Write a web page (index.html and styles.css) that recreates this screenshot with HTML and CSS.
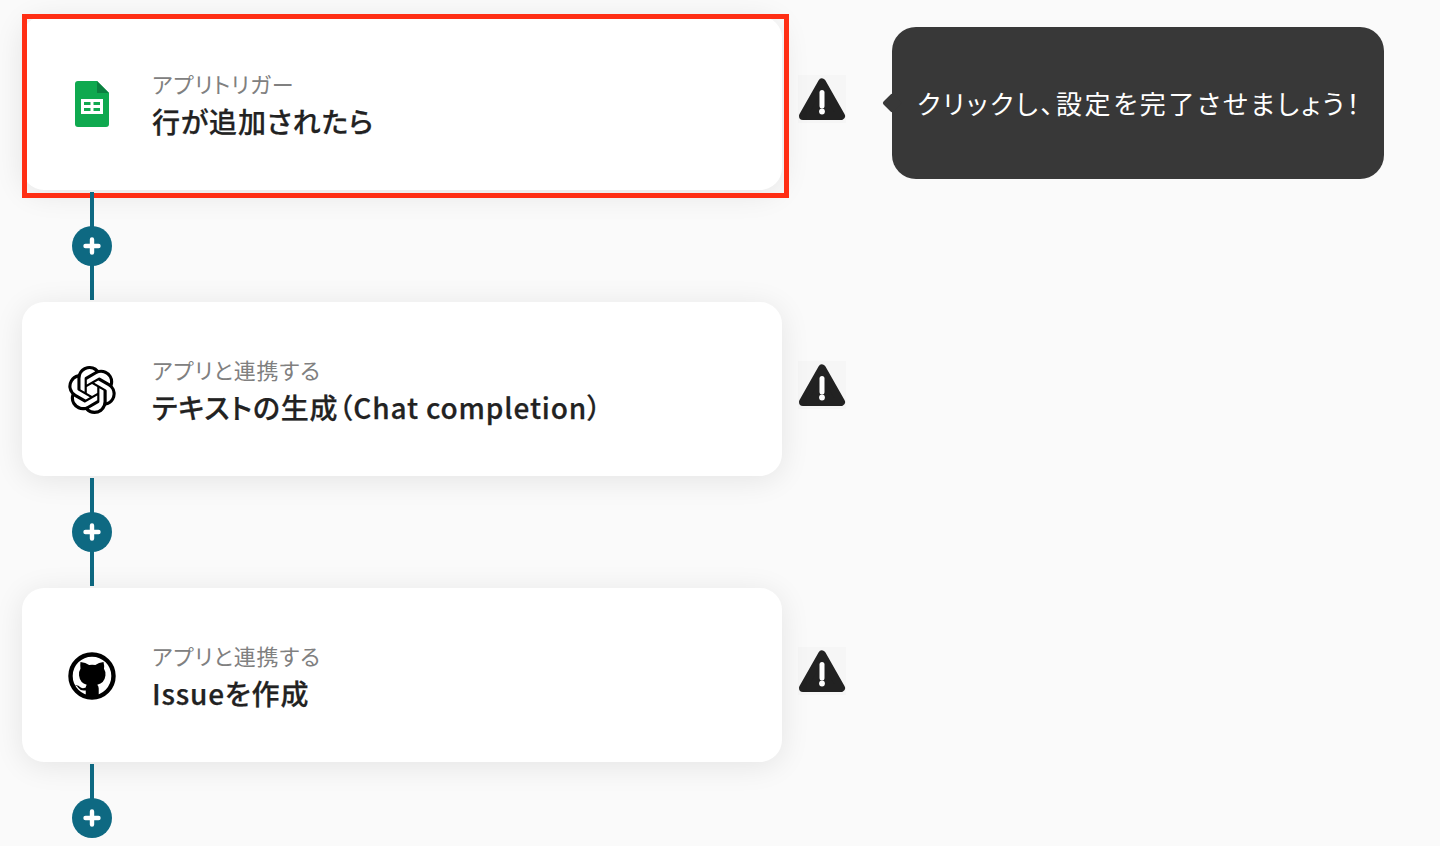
FILE: index.html
```html
<!DOCTYPE html>
<html lang="ja">
<head>
    <meta charset="UTF-8">
    <meta name="viewport" content="width=device-width, initial-scale=1.0">
    <title>フロー</title>
    <link rel="stylesheet" href="styles.css">
</head>
<body>
    <svg class="defs" width="0" height="0">
        <symbol id="warn" viewBox="0 0 48 48">
            <path d="M24 7.500 L43 41 L5 41 Z" fill="#222" stroke="#222" stroke-width="8" stroke-linejoin="round"/>
            <rect x="21.500" y="15" width="5" height="18.500" rx="2.500" fill="#fff"/>
            <circle cx="24" cy="36.500" r="2.900" fill="#fff"/>
        </symbol>
        <symbol id="plus" viewBox="0 0 40 40">
            <path d="M20 13.500 V26.500 M13.500 20 H26.500" stroke="#fff" stroke-width="4.400" stroke-linecap="round"/>
        </symbol>
    </svg>

    <div class="flow">
        <div class="step">
            <div class="card">
                <div class="highlight"></div>
                <div class="app-icon">
                    <svg width="34" height="46" viewBox="0 0 34 46">
                        <path d="M3 0 H22 L34 12 V43 a3 3 0 0 1 -3 3 H3 a3 3 0 0 1 -3 -3 V3 a3 3 0 0 1 3 -3 Z" fill="#0fa94f"/>
                        <path d="M22 0 L34 12 H22 Z" fill="#0b8040"/>
                        <path d="M6 18 H28 V33 H6 Z M9 21 V24 H15.500 V21 Z M18.500 21 V24 H25 V21 Z M9 27 V30 H15.500 V27 Z M18.500 27 V30 H25 V27 Z" fill="#fff" fill-rule="evenodd"/>
                    </svg>
                </div>
                <div class="card-text">
                    <p class="card-label">アプリトリガー</p>
                    <p class="card-title">行が追加されたら</p>
                </div>
            </div>
            <svg class="warn"><use href="#warn"/></svg>
            <div class="tooltip">クリックし、設定を完了させましょう！</div>
        </div>
        <div class="connector">
            <span class="add"><svg width="40" height="40"><use href="#plus"/></svg></span>
        </div>

        <div class="step">
            <div class="card">
                <div class="app-icon">
                    <svg width="48" height="48" viewBox="0 0 24 24">
                        <path d="M22.2819 9.8211a5.9847 5.9847 0 0 0-.5157-4.9108 6.0462 6.0462 0 0 0-6.5098-2.9A6.0651 6.0651 0 0 0 4.9807 4.1818a5.9847 5.9847 0 0 0-3.9977 2.9 6.0462 6.0462 0 0 0 .7427 7.0966 5.98 5.98 0 0 0 .511 4.9107 6.051 6.051 0 0 0 6.5146 2.9001A5.9847 5.9847 0 0 0 13.2599 24a6.0557 6.0557 0 0 0 5.7718-4.2058 5.9894 5.9894 0 0 0 3.9977-2.9001 6.0557 6.0557 0 0 0-.7475-7.0729zm-9.022 12.6081a4.4755 4.4755 0 0 1-2.8764-1.0408l.1419-.0804 4.7783-2.7582a.7948.7948 0 0 0 .3927-.6813v-6.7369l2.02 1.1686a.071.071 0 0 1 .038.052v5.5826a4.504 4.504 0 0 1-4.4945 4.4944zm-9.6607-4.1254a4.4708 4.4708 0 0 1-.5346-3.0137l.142.0852 4.783 2.7582a.7712.7712 0 0 0 .7806 0l5.8428-3.3685v2.3324a.0804.0804 0 0 1-.0332.0615L9.74 19.9502a4.4992 4.4992 0 0 1-6.1408-1.6464zM2.3408 7.8956a4.485 4.485 0 0 1 2.3655-1.9728V11.6a.7664.7664 0 0 0 .3879.6765l5.8144 3.3543-2.0201 1.1685a.0757.0757 0 0 1-.071 0l-4.8303-2.7865A4.504 4.504 0 0 1 2.3408 7.872zm16.5963 3.8558L13.1038 8.364 15.1192 7.2a.0757.0757 0 0 1 .071 0l4.8303 2.7913a4.4944 4.4944 0 0 1-.6765 8.1042v-5.6772a.79.79 0 0 0-.407-.667zm2.0107-3.0231l-.142-.0852-4.7735-2.7818a.7759.7759 0 0 0-.7854 0L9.409 9.2297V6.8974a.0662.0662 0 0 1 .0284-.0615l4.8303-2.7866a4.4992 4.4992 0 0 1 6.6802 4.66zM8.3065 12.863l-2.02-1.1638a.0804.0804 0 0 1-.038-.0567V6.0742a4.4992 4.4992 0 0 1 7.3757-3.4537l-.142.0805L8.704 5.459a.7948.7948 0 0 0-.3927.6813zm1.0976-2.3654l2.602-1.4998 2.6069 1.4998v2.9994l-2.5974 1.4997-2.6067-1.4997Z" fill="#000"/>
                    </svg>
                </div>
                <div class="card-text">
                    <p class="card-label">アプリと連携する</p>
                    <p class="card-title">テキストの生成（Chat completion）</p>
                </div>
            </div>
            <svg class="warn"><use href="#warn"/></svg>
        </div>
        <div class="connector">
            <span class="add"><svg width="40" height="40"><use href="#plus"/></svg></span>
        </div>

        <div class="step">
            <div class="card">
                <div class="app-icon">
                    <svg width="50" height="50" viewBox="0 0 50 50">
                        <circle cx="25" cy="25" r="22.400" fill="none" stroke="#000" stroke-width="4.600"/>
                        <path d="M13 10.500 Q18.500 11 22 13.500 Q25 13 28.500 13.500 Q32 11 37 10.500 Q38 14.500 37.500 17.500 Q39.500 20.500 39 24.500 Q38 32.500 30.500 34 Q32 35.500 32 38 V46 H18.500 V40 Q13.500 41 11 37.500 Q9.500 35 7 35 Q10.500 34 12.500 36.500 Q14.500 38.500 18.500 37 Q18.500 35.500 19.500 34 Q12.500 32.500 11.500 24.500 Q11 20.500 13 17.500 Q12.500 14 13 10.500 Z" fill="#000"/>
                    </svg>
                </div>
                <div class="card-text">
                    <p class="card-label">アプリと連携する</p>
                    <p class="card-title">Issueを作成</p>
                </div>
            </div>
            <svg class="warn"><use href="#warn"/></svg>
        </div>
        <div class="connector connector-last">
            <span class="add"><svg width="40" height="40"><use href="#plus"/></svg></span>
        </div>
    </div>
</body>
</html>
```
FILE: styles.css
```css
html, body {
    margin: 0;
    height: 846px;
    overflow: hidden;
}
body {
    background: #fafafa;
    font-family: "Noto Sans CJK JP", "Noto Sans", sans-serif;
    color: #222;
}
.defs { position: absolute; }

.flow { padding: 16px 0 0 22px; }
.step { display: flex; align-items: center; }

.card {
    position: relative;
    width: 760px;
    height: 174px;
    box-sizing: border-box;
    display: flex;
    align-items: center;
    gap: 36px;
    padding-left: 46px;
    background: #fff;
    border-radius: 22px;
    box-shadow: 0 4px 30px rgba(0, 0, 0, 0.09);
}
.highlight {
    position: absolute;
    top: -2px;
    left: 0;
    right: -7px;
    bottom: -8px;
    border: 5px solid #ff2e14;
}
.app-icon {
    width: 48px;
    padding-top: 2px;
    display: flex;
    justify-content: center;
}
.card-text { padding-top: 3px; }
.card-label {
    margin: 0;
    font-size: 22px;
    line-height: 30px;
    letter-spacing: 0.04em;
    color: #808080;
    font-feature-settings: "palt";
}
.card-title {
    margin: 2px 0 0;
    font-size: 28px;
    line-height: 42px;
    font-weight: 500;
    letter-spacing: 0.03em;
    -webkit-text-stroke: 0.25px #222;
    color: #222;
    font-feature-settings: "palt";
}

.warn {
    width: 48px;
    height: 48px;
    margin: 0 0 8px 16px;
    background: #f6f6f6;
}
.tooltip {
    position: relative;
    width: 492px;
    height: 152px;
    box-sizing: border-box;
    margin-left: 46px;
    padding: 0 0 2px 25px;
    display: flex;
    align-items: center;
    background: #383838;
    border-radius: 24px;
    color: #fff;
    font-size: 26px;
    letter-spacing: 0.1em;
    font-feature-settings: "palt";
}
.tooltip::before {
    content: "";
    position: absolute;
    left: -7px;
    top: 69px;
    width: 14px;
    height: 14px;
    background: #383838;
    border-radius: 2px;
    transform: rotate(45deg);
}

.connector {
    position: relative;
    height: 112px;
    display: flex;
    align-items: center;
    margin-left: 50px;
}
.connector::before {
    content: "";
    position: absolute;
    left: 18px;
    top: 2px;
    bottom: 2px;
    width: 4px;
    background: #0e6982;
}
.connector-last::before { bottom: 50%; }
.add {
    position: relative;
    width: 40px;
    height: 40px;
    border-radius: 50%;
    background: #0e6982;
}
.add svg { display: block; }
```
